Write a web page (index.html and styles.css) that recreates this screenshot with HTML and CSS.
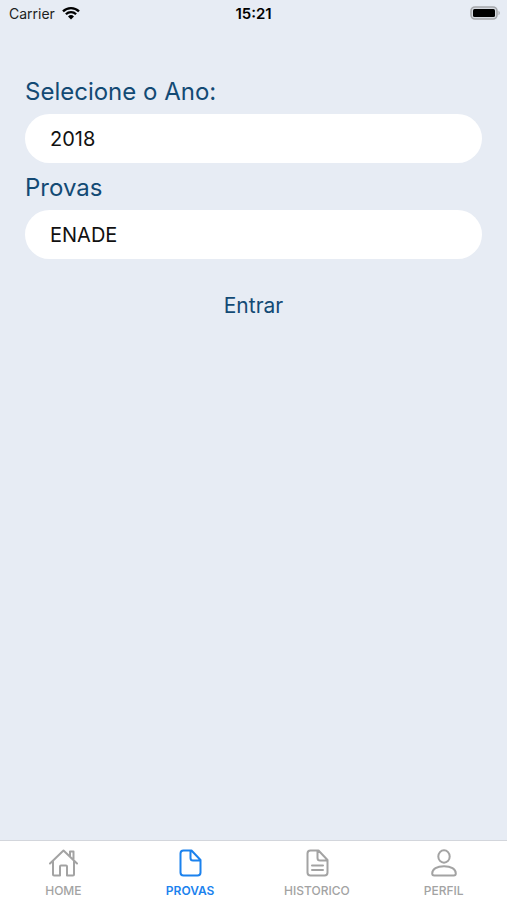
FILE: index.html
```
<!DOCTYPE html>
<html lang="pt-BR">
<head>
    <meta charset="UTF-8">
    <meta name="viewport" content="width=device-width, initial-scale=1.0">
    <title>Provas</title>
    <link rel="stylesheet" href="styles.css">
</head>
<body>
    <header class="status-bar">
        <div class="carrier">
            <span>Carrier</span>
            <svg class="wifi" viewBox="0 0 18 14" aria-hidden="true">
                <path d="M1 5.4a11.3 11.3 0 0 1 16 0M3.9 8.3a7.2 7.2 0 0 1 10.2 0" fill="none" stroke="#000" stroke-width="2.3"/>
                <path d="M9 13.6l-3-3.1a4.3 4.3 0 0 1 6 0z"/>
            </svg>
        </div>
        <time class="clock">15:21</time>
        <svg class="battery" viewBox="0 0 31 14" aria-hidden="true">
            <rect x="1" y="1" width="26" height="12" rx="4" fill="#d5d9e0" stroke="#a5a7ab" stroke-width="1.6"/>
            <rect x="3" y="3" width="22" height="8" rx="1.5"/>
            <path d="M28.5 4.8a2.5 2.5 0 0 1 0 4.4z" fill="#a5a7ab"/>
        </svg>
    </header>

    <main>
        <form class="exam-form">
            <label for="ano">Selecione o Ano:</label>
            <select id="ano">
                <option>2018</option>
            </select>
            <label for="prova">Provas</label>
            <select id="prova">
                <option>ENADE</option>
            </select>
            <button type="button">Entrar</button>
        </form>
    </main>

    <nav class="tab-bar">
        <a href="#home">
            <svg viewBox="0 0 30 30" aria-hidden="true">
                <path d="M2 15.5L15.5 2.5 29 15.5M5 13V26.5a1 1 0 0 0 1 1h6V18.500a1 1 0 0 1 1-1h5a1 1 0 0 1 1 1V27.500h6a1 1 0 0 0 1-1V13M22 8.500V3.5H25.500V12"/>
            </svg>
            <span>HOME</span>
        </a>
        <a href="#provas" class="active">
            <svg viewBox="0 0 30 30" aria-hidden="true">
                <path d="M8.5 2.5H16.5L25.5 12V24.5a3 3 0 0 1-3 3H8.5a3 3 0 0 1-3-3V5.5a3 3 0 0 1 3-3zM15.5 3V10a2.500 2.500 0 0 0 2.500 2.500H25"/>
            </svg>
            <span>PROVAS</span>
        </a>
        <a href="#historico">
            <svg viewBox="0 0 30 30" aria-hidden="true">
                <path d="M8.5 2.5H16.5L25.5 12V24.5a3 3 0 0 1-3 3H8.5a3 3 0 0 1-3-3V5.5a3 3 0 0 1 3-3zM15.5 3V10a2.500 2.500 0 0 0 2.500 2.500H25M10 17.500h11M10 22h11"/>
            </svg>
            <span>HISTORICO</span>
        </a>
        <a href="#perfil">
            <svg viewBox="0 0 30 30" aria-hidden="true">
                <ellipse cx="15" cy="8.5" rx="5.7" ry="6.2"/>
                <path d="M3.2 25.5C3.2 21 8 18.2 15 18.2S26.800 21 26.800 25.500c0 1.200-.8 2-2 2H5.200c-1.200 0-2-.8-2-2z"/>
            </svg>
            <span>PERFIL</span>
        </a>
    </nav>
</body>
</html>
```
FILE: styles.css
```
* {
    box-sizing: border-box;
}

body {
    margin: 0;
    min-height: 100vh;
    display: flex;
    flex-direction: column;
    font-family: Inter, "Liberation Sans", sans-serif;
    background: #e7ecf4;
}

.status-bar {
    display: grid;
    grid-template-columns: 1fr auto 1fr;
    align-items: center;
    height: 26px;
    padding: 0 6px;
    font-size: 14px;
    color: #1c1e22;
}

.carrier {
    display: flex;
    align-items: center;
    gap: 7px;
    padding-left: 3px;
}

.wifi {
    width: 18px;
    height: 14px;
}

.clock {
    font-size: 15px;
    font-weight: 600;
    color: #000;
}

.battery {
    width: 31px;
    height: 14px;
    justify-self: end;
}

main {
    flex: 1;
    padding: 44px 25px;
}

.exam-form {
    display: flex;
    flex-direction: column;
}

.exam-form label {
    padding: 3px 0;
    font-size: 24px;
    line-height: 38px;
    color: #134a74;
}

.exam-form select {
    appearance: none;
    width: 100%;
    height: 49px;
    margin: 0 0 3px;
    padding: 0 25px;
    border: none;
    border-radius: 25px;
    background: #fff;
    color: #111;
    font-family: inherit;
    font-size: 20px;
}

.exam-form button {
    align-self: center;
    margin-top: 25px;
    padding: 4px 16px;
    border: none;
    background: none;
    color: #134a74;
    font-family: inherit;
    font-size: 21px;
    line-height: 30px;
    cursor: pointer;
}

.tab-bar {
    display: flex;
    height: 60px;
    border-top: 1px solid #d3d6dc;
    background: #fff;
}

.tab-bar a {
    flex: 1;
    display: flex;
    flex-direction: column;
    align-items: center;
    gap: 5px;
    padding-top: 7px;
    color: #a3a3a3;
    font-size: 12px;
    font-weight: 500;
    line-height: 16px;
    text-decoration: none;
}

.tab-bar svg {
    width: 30px;
    height: 30px;
    fill: none;
    stroke: currentColor;
    stroke-width: 2;
    stroke-linejoin: round;
    stroke-linecap: round;
}

.tab-bar .active {
    color: #1b82ee;
    font-weight: 600;
}
```
